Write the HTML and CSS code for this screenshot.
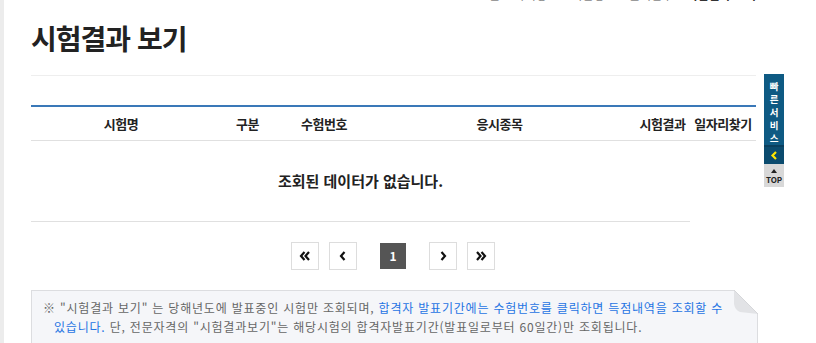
FILE: index.html
```html
<!DOCTYPE html>
<html lang="ko">
<head>
    <meta charset="UTF-8">
    <meta name="viewport" content="width=device-width, initial-scale=1.0">
    <title>시험결과 보기</title>
    <link rel="stylesheet" href="styles.css">
</head>
<body>
    <div class="wrap">
        <div class="content">
            <!-- breadcrumb (cut off at the top) -->
            <div class="location">
                <p>홈 &gt; 자격정보 &gt; 시험정보 &gt; 원서접수 &gt; <strong>시험결과 보기</strong></p>
            </div>

            <h1 class="title">시험결과 보기</h1>

            <table class="result-table">
                <colgroup>
                    <col style="width: 180px">
                    <col style="width: 73px">
                    <col style="width: 80px">
                    <col style="width: 271px">
                    <col style="width: 55px">
                    <col style="width: 66px">
                </colgroup>
                <thead>
                    <tr>
                        <th>시험명</th>
                        <th>구분</th>
                        <th>수험번호</th>
                        <th>응시종목</th>
                        <th>시험결과</th>
                        <th>일자리찾기</th>
                    </tr>
                </thead>
                <tbody>
                    <tr>
                        <td class="empty" colspan="5">조회된 데이터가 없습니다.</td>
                        <td class="blank"></td>
                    </tr>
                </tbody>
            </table>

            <div class="paging">
                <div class="paging-group">
                    <a href="#" class="page-btn" title="처음">
                        <svg width="12" height="10" viewBox="0 0 12 10"><path d="M5.5 1 L2 5 L5.5 9 M10 1 L6.5 5 L10 9" fill="none" stroke="#111" stroke-width="2.2"/></svg>
                    </a>
                    <a href="#" class="page-btn" title="이전">
                        <svg width="8" height="10" viewBox="0 0 8 10"><path d="M5.5 1 L2 5 L5.5 9" fill="none" stroke="#111" stroke-width="2.2"/></svg>
                    </a>
                </div>
                <span class="page-num">1</span>
                <div class="paging-group">
                    <a href="#" class="page-btn" title="다음">
                        <svg width="8" height="10" viewBox="0 0 8 10"><path d="M2.5 1 L6 5 L2.5 9" fill="none" stroke="#111" stroke-width="2.2"/></svg>
                    </a>
                    <a href="#" class="page-btn" title="마지막">
                        <svg width="12" height="10" viewBox="0 0 12 10"><path d="M2 1 L5.5 5 L2 9 M6.5 1 L10 5 L6.5 9" fill="none" stroke="#111" stroke-width="2.2"/></svg>
                    </a>
                </div>
            </div>

            <div class="notice">
                <svg class="fold" width="24" height="24" viewBox="0 0 24 24">
                    <path d="M0 0 L24 0 L24 24 Z" fill="#fff"/>
                    <path d="M0 0 L24 24 L6 22 Q1 20 0 14 Z" fill="#e2e3e6"/>
                    <path d="M0 0 L24 24" stroke="#d6d7da" stroke-width="1"/>
                </svg>
                <p>※ "시험결과 보기" 는 당해년도에 발표중인 시험만 조회되며, <span class="blue">합격자 발표기간에는 수험번호를 클릭하면 득점내역을 조회할 수<br>있습니다.</span> 단, 전문자격의 "시험결과보기"는 해당시험의 합격자발표기간(발표일로부터 60일간)만 조회됩니다.</p>
            </div>
        </div>
    </div>

    <!-- quick menu -->
    <div class="quick">
        <div class="quick-title">빠<br>른<br>서<br>비<br>스</div>
        <a href="#" class="quick-toggle" title="열기">
            <svg width="8" height="9" viewBox="0 0 8 9"><path d="M6 1 L2.5 4.5 L6 8" fill="none" stroke="#ffe600" stroke-width="2.2"/></svg>
        </a>
        <a href="#" class="quick-top">
            <svg width="6" height="4" viewBox="0 0 6 4"><path d="M3 0 L6 4 L0 4 Z" fill="#222"/></svg>
            <span>TOP</span>
        </a>
    </div>
</body>
</html>
```

FILE: styles.css
```css
* {
    box-sizing: border-box;
    margin: 0;
    padding: 0;
}

body {
    font-family: "Noto Sans CJK KR", "Noto Sans", sans-serif;
    background-color: #fff;
    color: #222;
}

a {
    text-decoration: none;
    color: inherit;
}

.wrap {
    border-left: 4px solid #ececec;
    min-height: 343px;
    padding-left: 27px;
}

.content {
    width: 727px;
}

/* breadcrumb, only its bottom edge is visible */
.location {
    height: 3px;
    overflow: hidden;
    text-align: right;
    padding-right: 2px;
}

.location p {
    margin-top: -11px;
    font-size: 12px;
    line-height: 12px;
    color: #888;
}

.location strong {
    color: #333;
}

.title {
    margin-top: 19px;
    font-size: 28px;
    line-height: 32px;
    letter-spacing: -1px;
    font-weight: bold;
    color: #222;
    padding-bottom: 21px;
    border-bottom: 1px solid #eee;
    width: 725px;
}

.result-table {
    margin-top: 29px;
    width: 725px;
    border-collapse: collapse;
    table-layout: fixed;
    border-top: 2px solid #3a78b8;
}

.result-table th {
    height: 34px;
    padding: 0;
    font-size: 13px;
    letter-spacing: -0.5px;
    font-weight: bold;
    color: #222;
    text-align: center;
    border-bottom: 1px solid #e0e0e0;
    white-space: nowrap;
}

.result-table td.empty {
    height: 81px;
    text-align: center;
    font-size: 15px;
    font-weight: bold;
    color: #222;
    border-bottom: 1px solid #e0e0e0;
}

.paging {
    display: flex;
    justify-content: center;
    align-items: center;
    gap: 23px;
    margin-top: 20px;
    height: 28px;
    padding-right: 3px;
}

.paging-group {
    display: flex;
    gap: 10px;
}

.page-btn {
    display: flex;
    align-items: center;
    justify-content: center;
    width: 28px;
    height: 28px;
    border: 1px solid #ddd;
    background: #fff;
}

.page-num {
    display: flex;
    align-items: center;
    justify-content: center;
    width: 26px;
    height: 26px;
    background: #555;
    color: #fff;
    font-size: 12px;
    font-weight: bold;
}

.notice {
    position: relative;
    margin-top: 20px;
    width: 727px;
    height: 60px;
    border: 1px solid #dcdde0;
    background: #f5f6f9;
    padding: 7px 20px 0 22px;
}

.notice .fold {
    position: absolute;
    top: -1px;
    right: -1px;
}

.notice p {
    font-size: 12px;
    line-height: 19px;
    letter-spacing: 0.8px;
    color: #666;
    text-indent: -11px;
    white-space: nowrap;
}

.notice .blue {
    color: #1f74e3;
}

/* floating quick menu */
.quick {
    position: fixed;
    left: 764px;
    top: 74px;
    width: 20px;
}

.quick-title {
    background: #0e5a83;
    color: #fff;
    font-size: 9.5px;
    font-weight: bold;
    line-height: 13px;
    text-align: center;
    padding-top: 6px;
    height: 73px;
    overflow: hidden;
    border-bottom: 2px solid #0a3f5e;
}

.quick-toggle {
    display: flex;
    align-items: center;
    justify-content: center;
    height: 17px;
    background: #0b4b6e;
}

.quick-top {
    display: flex;
    flex-direction: column;
    align-items: center;
    height: 23px;
    background: #d8d8d8;
    color: #222;
    font-size: 8px;
    font-weight: bold;
    line-height: 9px;
    padding-top: 5px;
    gap: 2px;
}
```
